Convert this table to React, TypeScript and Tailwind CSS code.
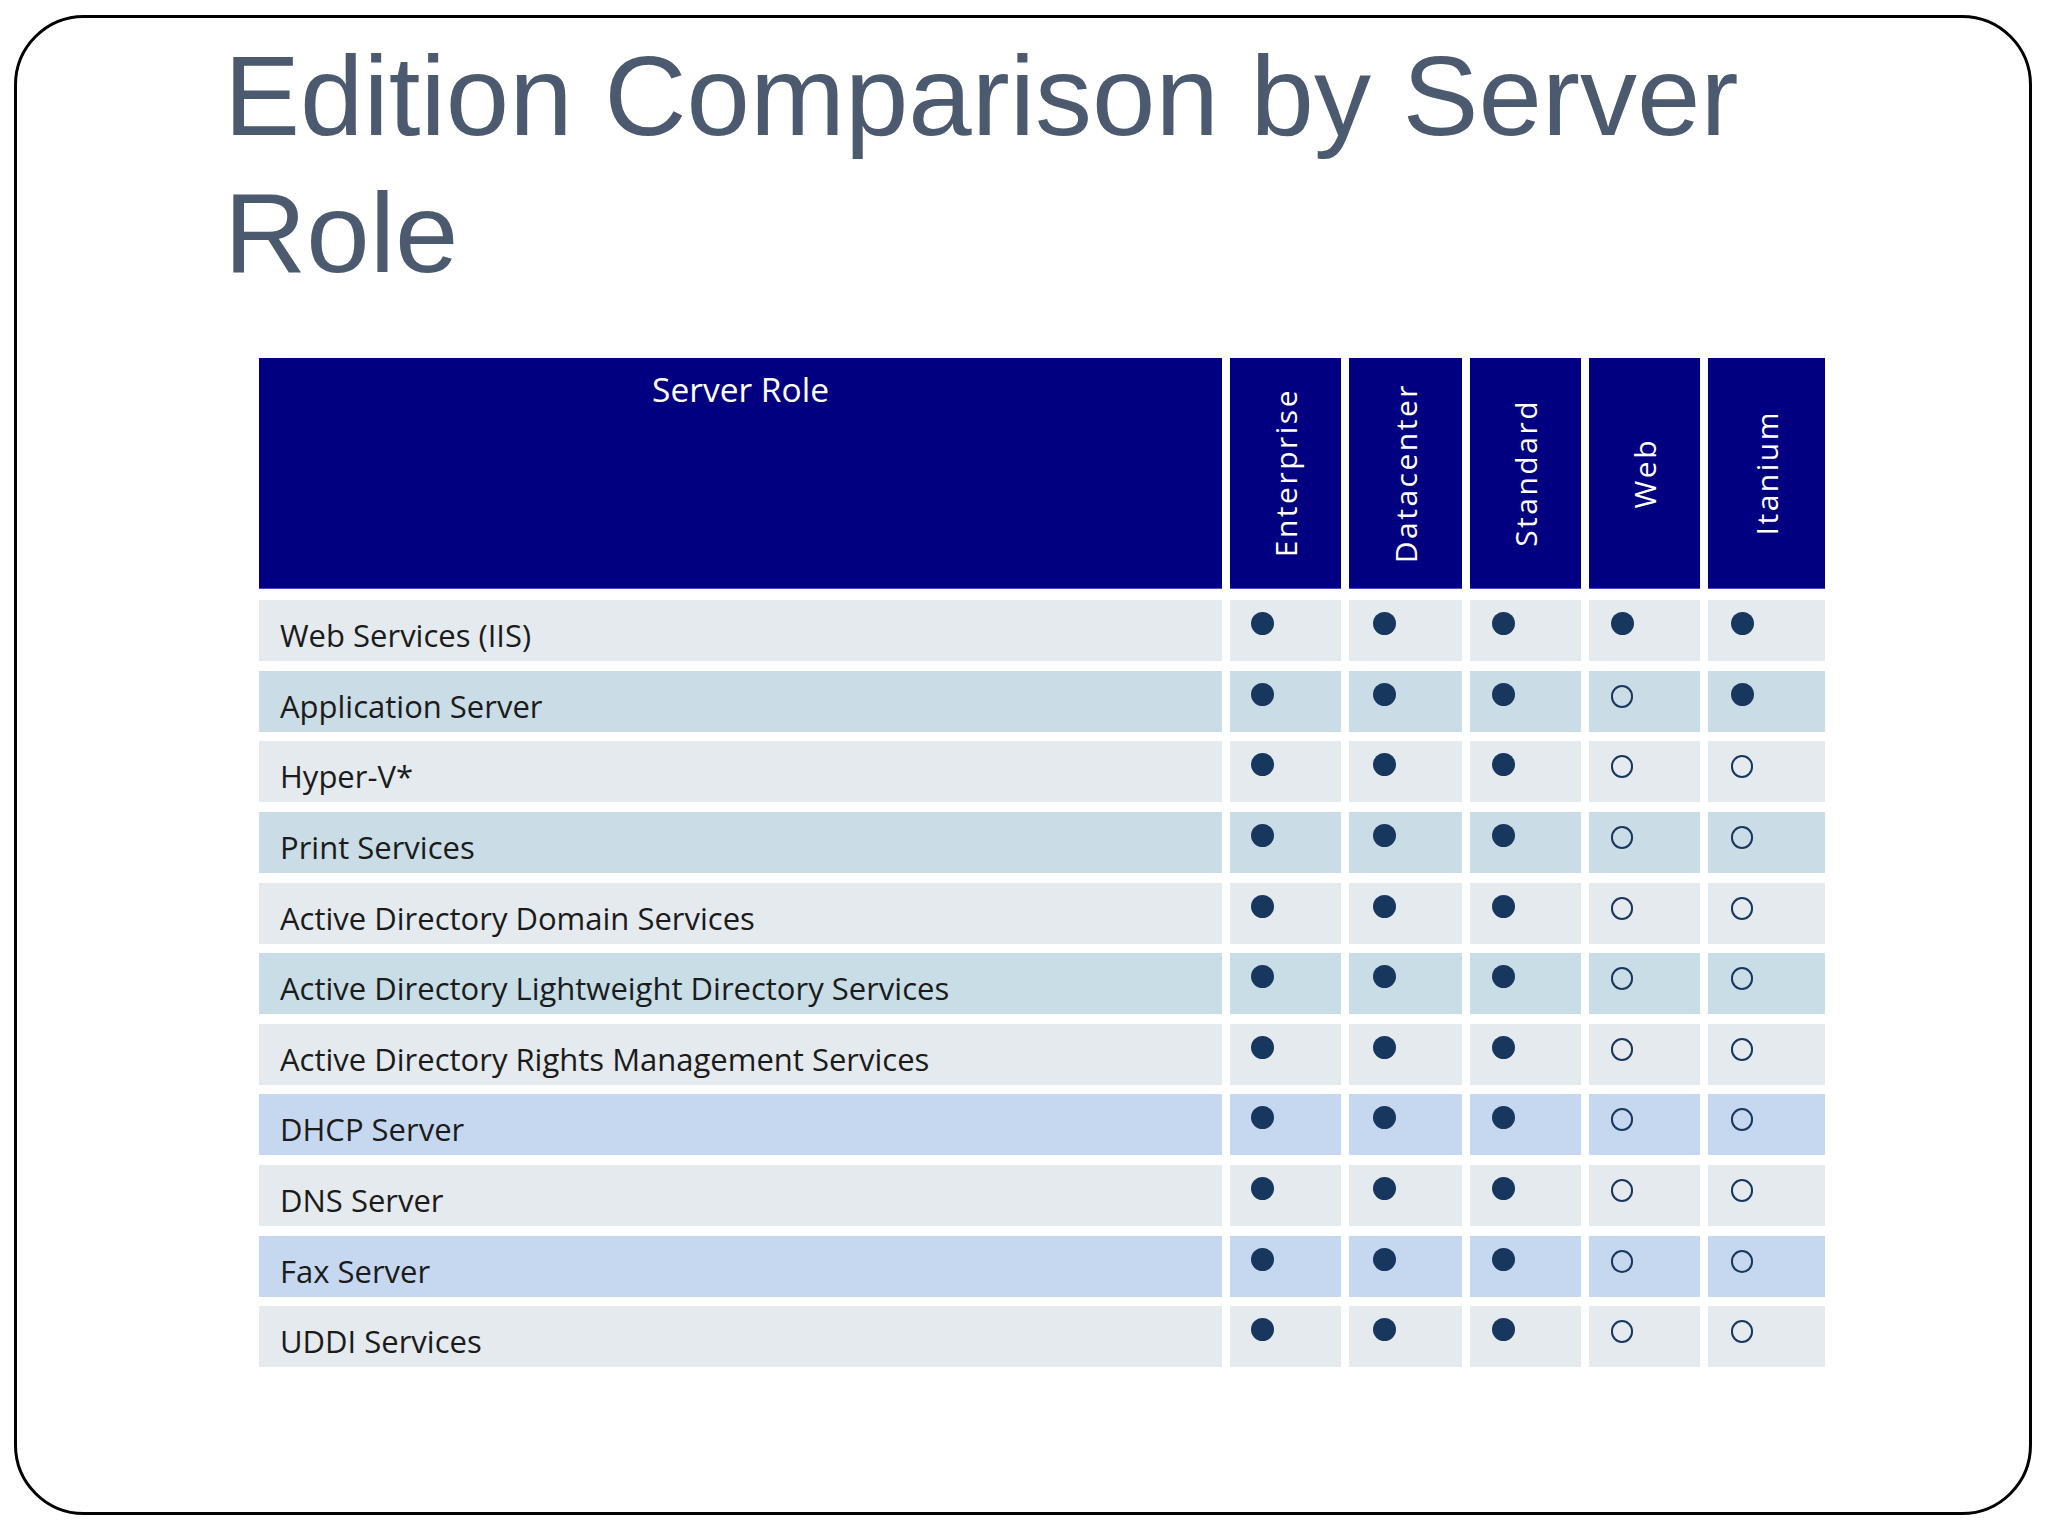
import React from "react";

type Row = { label: string; bg: string; marks: boolean[] };

const F = true;
const H = false;

const rows: Row[] = [
  { label: "Web Services (IIS)", bg: "bg-[#e4eaee]", marks: [F, F, F, F, F] },
  { label: "Application Server", bg: "bg-[#cadce5]", marks: [F, F, F, H, F] },
  { label: "Hyper-V*", bg: "bg-[#e4eaee]", marks: [F, F, F, H, H] },
  { label: "Print Services", bg: "bg-[#cadce5]", marks: [F, F, F, H, H] },
  { label: "Active Directory Domain Services", bg: "bg-[#e4eaee]", marks: [F, F, F, H, H] },
  { label: "Active Directory Lightweight Directory Services", bg: "bg-[#c8dde6]", marks: [F, F, F, H, H] },
  { label: "Active Directory Rights Management Services", bg: "bg-[#e4eaee]", marks: [F, F, F, H, H] },
  { label: "DHCP Server", bg: "bg-[#c6d8f0]", marks: [F, F, F, H, H] },
  { label: "DNS Server", bg: "bg-[#e4eaee]", marks: [F, F, F, H, H] },
  { label: "Fax Server", bg: "bg-[#c6d8f0]", marks: [F, F, F, H, H] },
  { label: "UDDI Services", bg: "bg-[#e4eaee]", marks: [F, F, F, H, H] },
];

const editions = ["Enterprise", "Datacenter", "Standard", "Web", "Itanium"];

const markPad = ["pl-[21px]", "pl-[24px]", "pl-[22px]", "pl-[22px]", "pl-[23px]"];

const COLS = "grid grid-cols-[963px_111px_113px_111px_111px_117px] gap-x-[8px]";

function Mark({ filled }: { filled: boolean }) {
  if (filled) {
    return <span className="block w-[23px] h-[23px] rounded-full bg-[#17375f]" />;
  }
  return <span className="block mt-[2px] w-[22px] h-[23px] rounded-full border-2 border-[#17375f]" />;
}

export default function App() {
  return (
    <div className="w-[2048px] h-[1536px] bg-white pt-[15px] pl-[14px] overflow-hidden">
      <div className="w-[2018px] h-[1500px] border-[3px] border-black rounded-[70px] pl-[207px] pt-[9px]">
        <h1 className="w-[1620px] text-[114px] leading-[137px] font-normal text-[#4b5a6f] font-['Liberation_Sans',Arial,sans-serif]">
          Edition Comparison by Server Role
        </h1>

        <div className="mt-[57px] ml-[35px] font-['Open_Sans','Noto_Sans',sans-serif]">
          <div className={`${COLS} h-[231px]`}>
            <div className="bg-[#000080] border-b border-[#4b4bc4] text-center text-white text-[33.5px] leading-[46px] pt-[8px]">
              Server Role
            </div>
            {editions.map((e) => (
              <div
                key={e}
                className="bg-[#000080] border-b border-[#4b4bc4] flex items-center justify-center"
              >
                <span className="[writing-mode:vertical-rl] rotate-180 text-white text-[30px] leading-[34px] tracking-[2.5px] whitespace-nowrap">
                  {e}
                </span>
              </div>
            ))}
          </div>

          <div className="mt-[11px] flex flex-col gap-y-[9.65px]">
            {rows.map((r) => (
              <div key={r.label} className={`${COLS} h-[61px]`}>
                <div className={`${r.bg} pl-[21px] pt-[14px] text-[31px] leading-[42px] text-[#1b1b1b] whitespace-nowrap`}>
                  {r.label}
                </div>
                {r.marks.map((m, i) => (
                  <div key={i} className={`${r.bg} ${markPad[i]} pt-[12px]`}>
                    <Mark filled={m} />
                  </div>
                ))}
              </div>
            ))}
          </div>
        </div>
      </div>
    </div>
  );
}
